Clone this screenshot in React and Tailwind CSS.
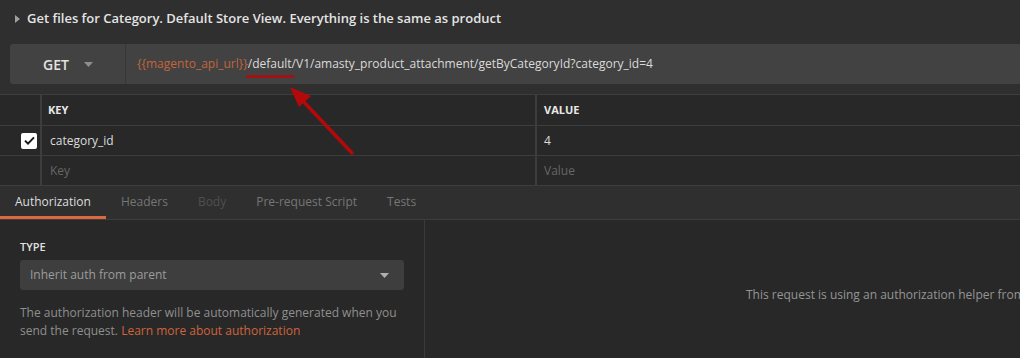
import { useState } from 'react'

const tabs = [
  { label: 'Authorization', state: 'active' },
  { label: 'Headers', state: 'idle' },
  { label: 'Body', state: 'disabled' },
  { label: 'Pre-request Script', state: 'idle' },
  { label: 'Tests', state: 'idle' },
]

function Caret({ className = '' }) {
  return (
    <svg width="9" height="5" viewBox="0 0 9 5" className={className}>
      <path d="M0 0h9L4.5 5z" fill="currentColor" />
    </svg>
  )
}

function Checkbox() {
  return (
    <div className="w-4 h-4 bg-white rounded-[2px] flex items-center justify-center">
      <svg width="11" height="9" viewBox="0 0 11 9">
        <path d="M1 4.6l3 3L10 1.4" fill="none" stroke="#1a1a1a" strokeWidth="2" />
      </svg>
    </div>
  )
}

export default function App() {
  const [activeTab] = useState('Authorization')

  return (
    <div className="relative w-[1020px] h-[358px] overflow-hidden bg-[#282828] font-['Open_Sans',sans-serif] text-[12px]">
      {/* Request name + url */}
      <div className="bg-[#2f2f2f] pt-[10px] pb-[10px]">
        <div className="h-[18px] flex items-center pl-[15px] gap-[7px] text-[#e4e4e4]">
          <svg width="5" height="8" viewBox="0 0 5 8" className="text-[#a0a0a0]">
            <path d="M0 0l5 4-5 4z" fill="currentColor" />
          </svg>
          <span className="text-[13px] font-semibold">
            Get files for Category. Default Store View. Everything is the same as product
          </span>
        </div>
        <div className="mt-[16px] ml-[10px] h-[40px] flex bg-[#424242] rounded-l-[3px]">
          <div className="w-[116px] flex items-center pl-[33px] gap-[15px] border-r border-[#363636]">
            <span className="text-[14px] font-semibold text-[#e2e2e2]">GET</span>
            <Caret className="text-[#8e8e8e]" />
          </div>
          <div className="flex items-center pl-[11px] text-[12px] text-[#dadada] whitespace-nowrap">
            <span className="text-[#c2653d]">{'{{magento_api_url}}'}</span>
            /default/V1/amasty_product_attachment/getByCategoryId?category_id=4
          </div>
        </div>
      </div>

      {/* Params table */}
      <div className="border-t border-[#3d3d3d]">
        <div className="flex h-[31px] border-b border-[#3d3d3d]">
          <div className="w-[42px] border-r-2 border-[#3d3d3d]" />
          <div className="w-[495px] flex items-center pl-[6px] border-r-2 border-[#3d3d3d] text-[11px] font-bold text-[#e8e8e8]">KEY</div>
          <div className="flex-1 flex items-center pl-[7px] text-[11px] font-bold text-[#e8e8e8]">VALUE</div>
        </div>
        <div className="flex h-[30px] border-b border-[#3d3d3d]">
          <div className="w-[42px] border-r-2 border-[#3d3d3d] flex items-center pl-[21px]">
            <Checkbox />
          </div>
          <div className="w-[495px] flex items-center pl-[8px] border-r-2 border-[#3d3d3d] text-[#dcdcdc]">category_id</div>
          <div className="flex-1 flex items-center pl-[7px] text-[#dcdcdc]">4</div>
        </div>
        <div className="flex h-[30px] border-b border-[#3d3d3d]">
          <div className="w-[42px] border-r-2 border-[#3d3d3d]" />
          <div className="w-[495px] flex items-center pl-[8px] border-r-2 border-[#3d3d3d] text-[#666666]">Key</div>
          <div className="flex-1 flex items-center pl-[7px] text-[#666666]">Value</div>
        </div>
      </div>

      {/* Tabs */}
      <div className="h-[34px] flex bg-[#2f2f2f] border-b border-[#3d3d3d]">
        {tabs.map(t => (
          <div
            key={t.label}
            className={
              t.label === activeTab
                ? 'px-[15px] flex items-center pt-[1px] border-b-[3px] border-[#d9693f] text-[#dedede]'
                : t.state === 'disabled'
                  ? 'px-[15px] flex items-center pb-[2px] text-[#4f4f4f]'
                  : 'px-[15px] flex items-center pb-[2px] text-[#767676]'
            }
          >
            {t.label}
          </div>
        ))}
      </div>

      {/* Auth panel */}
      <div className="flex h-[138px]">
        <div className="w-[425px] border-r border-[#3a3a3a] px-[20px] pt-[19px]">
          <div className="text-[11px] font-semibold text-[#e0e0e0] leading-[16px]">TYPE</div>
          <div className="mt-[5px] w-[384px] h-[30px] bg-[#3e3e3e] rounded-[3px] flex items-center justify-between pl-[10px] pr-[15px]">
            <span className="text-[#9c9c9c]">Inherit auth from parent</span>
            <Caret className="text-[#b0b0b0]" />
          </div>
          <p className="mt-[14px] leading-[18px] text-[#8f8f8f] text-[12px]">
            The authorization header will be automatically generated when you send the request.{' '}
            <span className="text-[#d0643c]">Learn more about authorization</span>
          </p>
        </div>
        <div className="flex-1 pl-[321px] pt-[66px] text-[#959595] whitespace-nowrap">
          This request is using an authorization helper from collection
        </div>
      </div>

      {/* red annotation */}
      <svg className="absolute inset-0 pointer-events-none" width="1020" height="358" viewBox="0 0 1020 358">
        <path d="M247 76.5H293" stroke="#b4090b" strokeWidth="2.5" strokeLinecap="round" />
        <path d="M352 153L301 99" stroke="#b4090b" strokeWidth="3.5" strokeLinecap="round" />
        <path d="M290 87L311 96L299 107z" fill="#b4090b" />
      </svg>
    </div>
  )
}
